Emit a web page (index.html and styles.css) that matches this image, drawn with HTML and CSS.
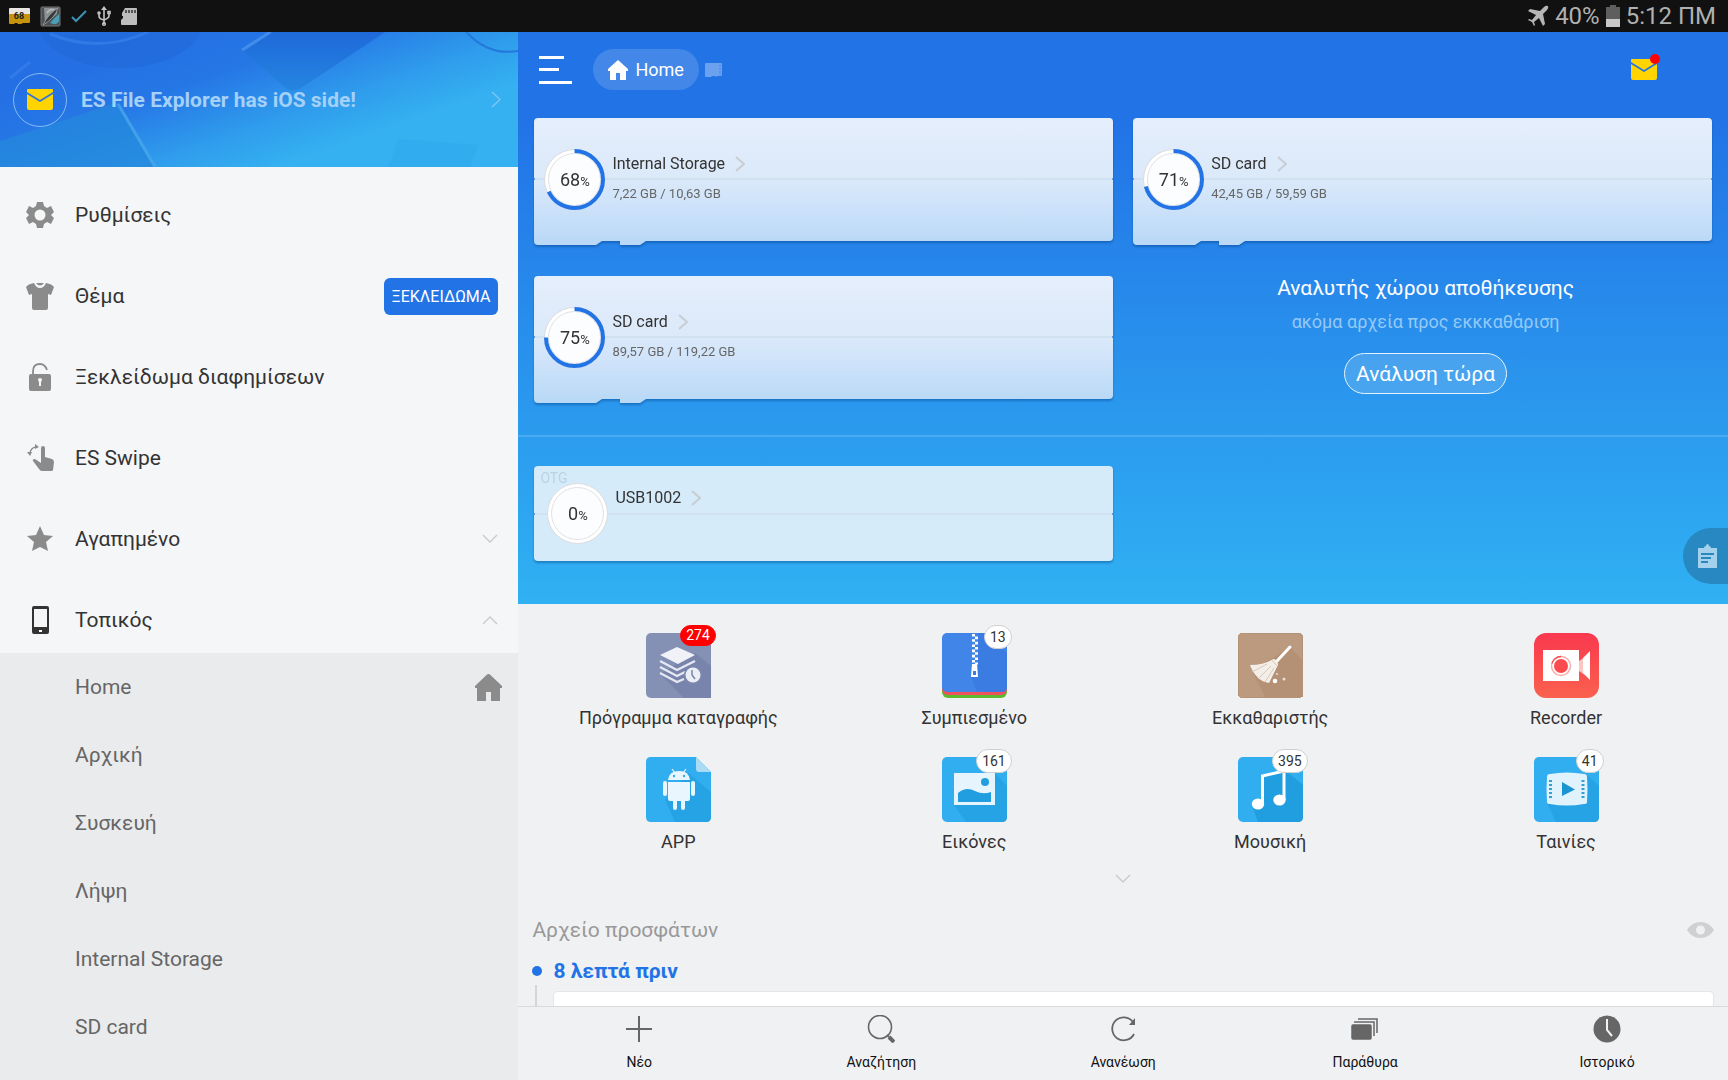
FILE: index.html
```html
<!doctype html>
<html lang="el">
  <head>
    <meta charset="UTF-8" />
    <meta name="viewport" content="width=device-width, initial-scale=1.0" />
    <title>ES File Explorer</title>
    <link rel="stylesheet" href="styles.css">
  </head>
  <body>
    <header class="status-bar">
      <div class="status-icons">
        <svg width="21" height="17" viewBox="0 0 21 17">
          <path d="M1 0h19q1 0 1 1v6H0V1q0-1 1-1z" fill="#e8e6df" />
          <path d="M0 6h21v8q0 1-1 1h-6l-2 1H9l-1-1H6l-1 1H1q-1 0-1-1z" fill="#c6930c" />
          <text x="10" y="11" text-anchor="middle" class="status-count">68</text>
        </svg>
        <svg width="21" height="21" viewBox="0 0 21 21">
          <rect x="1" y="1" width="19" height="19" rx="1" fill="#4c5154" stroke="#777" />
          <path d="M4 2h13v6L5 18z" fill="#8b9092" />
          <path d="M7 7q3-5 7-3" fill="none" stroke="#bbb" stroke-width="1.5" />
          <path d="M10 17q7 3 9-2V8q-5 4-9 9z" fill="#4b9fb8" />
          <path d="M18 2Q8 8 3 19 15 12 18 2z" fill="#34393b" stroke="#aaa" stroke-width=".7" />
        </svg>
        <svg width="16" height="21" viewBox="0 0 16 21">
          <path d="M1 11l4 4L15 5" fill="none" stroke="#3c93b5" stroke-width="2" />
        </svg>
        <svg width="14" height="21" viewBox="0 0 14 21" fill="none" stroke="#c4c4c4" stroke-width="1.6">
          <path d="M7 4v14M2 8v2q0 3 5 4M12 8v2q0 2-5 4" />
          <path d="M7 0l3 4H4z" fill="#c4c4c4" stroke="none" />
          <circle cx="2" cy="7" r="1" /><path d="M11 5.500h2v2h-2z" /><circle cx="7" cy="18" r="1.300" />
        </svg>
        <svg width="16" height="19" viewBox="0 0 16 19">
          <path d="M4 1h11q1 0 1 1v15q0 1-1 1H1q-1 0-1-1v-4l2-2V9H1V6z" fill="#bdbdbd" />
          <path d="M5 3v3M8 3v3M11 3v3M14 3v3" stroke="#333" stroke-width="1.500" />
        </svg>
      </div>
      <div class="status-info">
        <svg width="22" height="22" viewBox="0 0 22 22" fill="#b5b5b5">
          <path d="M21 1q-2-1-4 1l-4 4L3 4 1 6l8 4-4 5-3-1-1 1 4 2 2 4 1-1-1-3 5-4 4 8 2-2-2-10 4-4q2-2 1-4z" />
        </svg>
        <span>40%</span>
        <svg width="14" height="22" viewBox="0 0 14 22">
          <path d="M4 0h6v2h4v12H0V2h4z" fill="#5e5e5e" />
          <path d="M0 14h14v8H0z" fill="#c8c8c8" />
        </svg>
        <time>5:12 ΠΜ</time>
      </div>
    </header>

    <div class="app">
      <aside class="sidebar">
        <a class="promo" href="#ios">
          <svg class="promo-art" viewBox="0 0 518 135" preserveAspectRatio="none">
            <defs>
              <linearGradient id="promoBg" gradientUnits="userSpaceOnUse" x1="200" y1="0" x2="250" y2="145">
                <stop offset="0" stop-color="#2471e4" />
                <stop offset="0.3" stop-color="#2677e6" />
                <stop offset="0.7" stop-color="#2f9cec" />
                <stop offset="1" stop-color="#35b1f1" />
              </linearGradient>
              <linearGradient id="promoDark" x1="0" y1="0" x2="0" y2="1">
                <stop offset="0" stop-color="#1f69da" />
                <stop offset="1" stop-color="#2585e0" />
              </linearGradient>
            </defs>
            <path d="M0 0h518v135H0z" fill="url(#promoBg)" />
            <path d="M0 0h150l-60 40L0 70z" fill="#246fe3" opacity=".7" />
            <ellipse cx="120" cy="-10" rx="82" ry="46" fill="#2068d8" opacity=".5" />
            <path d="M50 2q50 20 98-2M30 30l-20 16" fill="none" stroke="#3b83ec" stroke-width="3" opacity=".6" />
            <path d="M243 19l30-19h112l-84 56q-10 6-18-2z" fill="url(#promoDark)" />
            <path d="M242 18l28-18" stroke="#4e97ee" stroke-width="3" opacity=".7" />
            <path d="M0 109l118-39 38 65H0z" fill="#2488dc" opacity=".75" />
            <path d="M118 72l37 63" stroke="#55b2f2" stroke-width="3" opacity=".6" />
            <path d="M466 0q22 24 52 19" fill="none" stroke="#2378dc" stroke-width="2" />
            <path d="M388 135l10-28 80 6-8 22z" fill="#2ca6ec" opacity=".35" />
          </svg>
          <span class="promo-icon">
            <svg width="26" height="21" viewBox="0 0 26 21" fill="#ffd400">
              <path d="M0 1q0-1 1-1h24q1 0 1 1v2L13 11 0 3z" />
              <path d="M0 5l13 8 13-8v14q0 2-2 2H2q-2 0-2-2z" />
            </svg>
          </span>
          <span class="promo-text">ES File Explorer has iOS side!</span>
          <svg width="10" height="17" viewBox="0 0 10 17" fill="none" stroke="#7cc4f5" stroke-width="1.500"><path d="M1 1l8 7.500L1 16" /></svg>
        </a>

        <ul class="menu">
          <li class="menu-row">
            <a href="#settings">
              <svg width="28" height="28" viewBox="0 0 28 28">
                <path d="M11 1h6l1 4 3 2 4-2 3 6-3 3 3 3-3 6-4-2-3 2-1 4h-6l-1-4-3-2-4 2-3-6 3-3-3-3 3-6 4 2 3-2z" fill="#8b8b8b" />
                <circle cx="14" cy="14" r="5.500" fill="#f5f6f8" />
              </svg>
              Ρυθμίσεις
            </a>
          </li>
          <li class="menu-row">
            <a href="#theme">
              <svg width="28" height="28" viewBox="0 0 28 28" fill="#8b8b8b">
                <path d="M8 1q2 5 6 5t6-5q6 1 8 4l-3 8-3-1v14q0 2-2 2H8q-2 0-2-2V12l-3 1-3-8q2-3 8-4z" />
                <path d="M10 1h8q-4 5-8 0z" />
              </svg>
              Θέμα
            </a>
            <button class="unlock">ΞΕΚΛΕΙΔΩΜΑ</button>
          </li>
          <li class="menu-row">
            <a href="#ads">
              <svg width="28" height="28" viewBox="0 0 28 28">
                <path d="M7 12V8q0-7 7-7 5 0 7 6" fill="none" stroke="#8b8b8b" stroke-width="1.800" />
                <rect x="3" y="11" width="22" height="17" rx="2" fill="#8b8b8b" />
                <circle cx="14" cy="17" r="2" fill="#f5f6f8" /><path d="M13 17h2v6h-2z" fill="#f5f6f8" />
              </svg>
              Ξεκλείδωμα διαφημίσεων
            </a>
          </li>
          <li class="menu-row">
            <a href="#swipe">
              <svg width="28" height="28" viewBox="0 0 28 28">
                <path d="M15 4q0-2 2-2t2 2v9l7 2q2 1 2 3l-1 8q0 1-2 1h-9q-2 0-3-2l-6-8q-1-2 2-2l6 4z" fill="#8b8b8b" />
                <path d="M4 9q1-6 7-6" fill="none" stroke="#8b8b8b" stroke-width="1.300" />
                <path d="M1 8h5l-2 4zM9 0v5l4-2z" fill="#8b8b8b" />
              </svg>
              ES Swipe
            </a>
          </li>
          <li class="menu-row">
            <button class="expander" aria-expanded="false">
              <svg width="28" height="28" viewBox="0 0 28 28"><path d="M14 1l4 9 9 1-7 6 2 9-8-4-8 4 2-9-7-6 9-1z" fill="#8b8b8b" /></svg>
              <span>Αγαπημένο</span>
              <svg width="16" height="10" viewBox="0 0 16 10" fill="none" stroke="#c8c9ca" stroke-width="1.300"><path d="M1 1l7 7 7-7" /></svg>
            </button>
          </li>
          <li class="menu-row">
            <button class="expander" aria-expanded="true">
              <svg width="28" height="28" viewBox="0 0 28 28">
                <rect x="6" y="0" width="17" height="28" rx="2" fill="#333" />
                <path d="M8 3h13v18H8z" fill="#f5f6f8" /><path d="M13 24h3v2h-3z" fill="#fff" />
              </svg>
              <span>Τοπικός</span>
              <svg width="16" height="10" viewBox="0 0 16 10" fill="none" stroke="#c8c9ca" stroke-width="1.300"><path d="M1 9l7-7 7 7" /></svg>
            </button>
          </li>
        </ul>

        <ul class="submenu">
          <li>
            <a href="#home">
              Home
              <svg width="27" height="27" viewBox="0 0 27 27" fill="#8b8b8b"><path d="M13.500 0q1 0 2 1L27 12v2h-2v13h-9v-9h-5v9H2V14H0v-2L11.500 1q1-1 2-1z" /></svg>
            </a>
          </li>
          <li><a href="#root">Αρχική</a></li>
          <li><a href="#device">Συσκευή</a></li>
          <li><a href="#download">Λήψη</a></li>
          <li><a href="#internal">Internal Storage</a></li>
          <li><a href="#sd">SD card</a></li>
        </ul>
      </aside>

      <main class="main">
        <div class="content">
          <section class="hero">
            <div class="toolbar">
              <button class="icon-button" aria-label="Menu">
                <svg width="33" height="28" viewBox="0 0 33 28" fill="#fff"><path d="M0 0h25v3H0zM0 12h20v3H0zM0 25h33v3H0z" /></svg>
              </button>
              <a class="pill" href="#home">
                <svg width="20" height="20" viewBox="0 0 20 20" fill="#fff"><path d="M10 0l10 9v2h-2v9h-6v-7H8v7H2v-9H0V9z" /></svg>
                Home
              </a>
              <svg class="tab-card" width="17" height="14" viewBox="0 0 17 14">
                <path d="M1 0h15q1 0 1 1v11q0 1-1 1h-4l-1 1-1-1H7l-1 1H1q-1 0-1-1V1q0-1 1-1z" fill="#6ba1ee" />
                <path d="M15 2v10" stroke="#4182e6" stroke-dasharray="2 1" />
              </svg>
              <button class="icon-button mail" aria-label="Messages">
                <svg width="26" height="21" viewBox="0 0 26 21" fill="#ffd400">
                  <path d="M0 1q0-1 1-1h24q1 0 1 1v2L13 11 0 3z" />
                  <path d="M0 5l13 8 13-8v14q0 2-2 2H2q-2 0-2-2z" />
                </svg>
                <span class="mail-dot"></span>
              </button>
            </div>

            <div class="storage-grid">
              <a class="storage" href="#internal">
                <div class="storage-body">
                  <div class="ring">
                    <svg viewBox="0 0 61 61">
                      <circle cx="30.500" cy="30.500" r="30" class="ring-base" />
                      <circle cx="30.500" cy="30.500" r="26" class="ring-inner" />
                      <circle cx="30.500" cy="30.500" r="28.500" pathLength="100" stroke-dasharray="68 100" class="ring-value" />
                    </svg>
                    <span>68<small>%</small></span>
                  </div>
                  <div class="storage-info">
                    <div class="storage-name">Internal Storage <svg width="10" height="16" viewBox="0 0 10 16"><path d="M1 1l8 7-8 7" /></svg></div>
                    <div class="storage-size">7,22 GB / 10,63 GB</div>
                  </div>
                </div>
                <svg class="storage-foot" width="112" height="4" viewBox="0 0 112 4"><path d="M0 0h68l-6 4H4Q0 4 0 0zM86 0h26l-6 4H86z" /></svg>
              </a>
              <a class="storage" href="#sd">
                <div class="storage-body">
                  <div class="ring">
                    <svg viewBox="0 0 61 61">
                      <circle cx="30.500" cy="30.500" r="30" class="ring-base" />
                      <circle cx="30.500" cy="30.500" r="26" class="ring-inner" />
                      <circle cx="30.500" cy="30.500" r="28.500" pathLength="100" stroke-dasharray="71 100" class="ring-value" />
                    </svg>
                    <span>71<small>%</small></span>
                  </div>
                  <div class="storage-info">
                    <div class="storage-name">SD card <svg width="10" height="16" viewBox="0 0 10 16"><path d="M1 1l8 7-8 7" /></svg></div>
                    <div class="storage-size">42,45 GB / 59,59 GB</div>
                  </div>
                </div>
                <svg class="storage-foot" width="112" height="4" viewBox="0 0 112 4"><path d="M0 0h68l-6 4H4Q0 4 0 0zM86 0h26l-6 4H86z" /></svg>
              </a>
              <a class="storage" href="#sd2">
                <div class="storage-body">
                  <div class="ring">
                    <svg viewBox="0 0 61 61">
                      <circle cx="30.500" cy="30.500" r="30" class="ring-base" />
                      <circle cx="30.500" cy="30.500" r="26" class="ring-inner" />
                      <circle cx="30.500" cy="30.500" r="28.500" pathLength="100" stroke-dasharray="75 100" class="ring-value" />
                    </svg>
                    <span>75<small>%</small></span>
                  </div>
                  <div class="storage-info">
                    <div class="storage-name">SD card <svg width="10" height="16" viewBox="0 0 10 16"><path d="M1 1l8 7-8 7" /></svg></div>
                    <div class="storage-size">89,57 GB / 119,22 GB</div>
                  </div>
                </div>
                <svg class="storage-foot" width="112" height="4" viewBox="0 0 112 4"><path d="M0 0h68l-6 4H4Q0 4 0 0zM86 0h26l-6 4H86z" /></svg>
              </a>
              <div class="analyser">
                <h2>Αναλυτής χώρου αποθήκευσης</h2>
                <p>ακόμα αρχεία προς εκκκαθάριση</p>
                <button>Ανάλυση τώρα</button>
              </div>
            </div>

            <div class="storage-grid usb">
              <a class="storage" href="#usb">
                <div class="storage-body otg">
                  <span class="otg-label">OTG</span>
                  <div class="ring">
                    <svg viewBox="0 0 61 61">
                      <circle cx="30.500" cy="30.500" r="30" class="ring-base" />
                      <circle cx="30.500" cy="30.500" r="26" class="ring-inner" />
                    </svg>
                    <span>0<small>%</small></span>
                  </div>
                  <div class="storage-info">
                    <div class="storage-name">USB1002 <svg width="10" height="16" viewBox="0 0 10 16"><path d="M1 1l8 7-8 7" /></svg></div>
                  </div>
                </div>
              </a>
            </div>

            <button class="clipboard" aria-label="Clipboard">
              <svg width="19" height="24" viewBox="0 0 19 24">
                <path d="M0 4h6q0-2 2-2 0-2 1.500-2T11 2q2 0 2 2h6v20H0z" fill="#a4d2ec" />
                <path d="M3 10h13M3 14h10M3 18h7" stroke="#2b88bd" stroke-width="2" />
              </svg>
            </button>
          </section>

          <nav class="apps">
            <a class="app-item" href="#logger">
              <span class="app-icon">
                <svg viewBox="0 0 65 65">
                  <rect width="65" height="65" rx="5" fill="#8590b5" />
                  <path d="M14 41l24 24h27V33L49 20z" fill="#7984ac" />
                  <path d="M14 22L31 14l18 8-17 9z" fill="#f0f2f8" />
                  <path d="M14 28l17 9 18-9M14 34l17 9 8-4M14 40l17 9 7-3" fill="none" stroke="#e6e9f3" stroke-width="2.200" />
                  <circle cx="47" cy="42" r="9" fill="#7d88b0" /><circle cx="47" cy="42" r="7.500" fill="#eceef5" />
                  <path d="M46 37v5l3 4" fill="none" stroke="#7984ac" stroke-width="1.500" />
                </svg>
                <span class="badge badge-new">274</span>
              </span>
              Πρόγραμμα καταγραφής
            </a>
            <a class="app-item" href="#compressed">
              <span class="app-icon">
                <svg viewBox="0 0 65 65">
                  <rect y="20" width="65" height="45" rx="6" fill="#5fb92e" />
                  <rect y="17" width="65" height="45" rx="6" fill="#f0525d" />
                  <rect width="65" height="59" rx="5" fill="#4285e8" />
                  <path d="M36 0v43l-7 1 6 15h25q5 0 5-5V20L45 0z" fill="#3a7ce2" />
                  <path d="M31.500 1v31" stroke="#fff" stroke-width="3" stroke-dasharray="2.600 2.600" />
                  <path d="M34.500 3.600v28" stroke="#fff" stroke-width="3" stroke-dasharray="2.600 2.600" />
                  <path d="M30 31h5l1 13h-7z" fill="#fff" /><path d="M31 38h3v4h-3z" fill="#3a7ce2" />
                </svg>
                <span class="badge">13</span>
              </span>
              Συμπιεσμένο
            </a>
            <a class="app-item" href="#cleaner">
              <span class="app-icon">
                <svg viewBox="0 0 65 65">
                  <rect width="65" height="65" rx="5" fill="#bc9a7f" stroke="#ac8a6f" />
                  <path d="M14 38l13 26h38V28L52 14z" fill="#b49075" />
                  <path d="M52 14L39 28" stroke="#fff" stroke-width="3" stroke-linecap="round" />
                  <path d="M35 26q5 0 5 6l-4 8-5 10Q18 48 12 32q14 0 23-6z" fill="#f4eee9" />
                  <path d="M34 27l5 6M33 33l-13 13M29 31l-15 8M36 35l-9 14" stroke="#d8c7b9" stroke-width="1" fill="none" />
                  <circle cx="37" cy="48" r="2.300" fill="#fff" /><circle cx="46" cy="46" r="1.500" fill="#eadfd6" /><circle cx="39" cy="41" r="1" fill="#eadfd6" />
                </svg>
              </span>
              Εκκαθαριστής
            </a>
            <a class="app-item" href="#recorder">
              <span class="app-icon">
                <svg viewBox="0 0 65 65">
                  <defs>
                    <linearGradient id="rec" x1="0" y1="0" x2="0" y2="1"><stop offset="0" stop-color="#fa384f" /><stop offset="1" stop-color="#fa614e" /></linearGradient>
                  </defs>
                  <rect width="65" height="65" rx="12" fill="url(#rec)" />
                  <path d="M9 17h36v31H9z" fill="#fff" /><path d="M45 28l6-4v18l-6-4z" fill="#fdc6c5" /><path d="M49 25l7-7v29l-7-7z" fill="#fff" />
                  <circle cx="27" cy="33" r="7" fill="#fb4b4f" /><circle cx="27" cy="33" r="9.500" fill="none" stroke="#fcaaa9" stroke-width="1.400" />
                  <path d="M27 23.500a9.500 9.500 0 0 0-9 7" fill="none" stroke="#fb4b4f" stroke-width="1.400" />
                </svg>
              </span>
              Recorder
            </a>
            <a class="app-item" href="#app">
              <span class="app-icon">
                <svg viewBox="0 0 65 65">
                  <path d="M5 0h45l15 15v45q0 5-5 5H5q-5 0-5-5V5q0-5 5-5z" fill="#30aeef" />
                  <path d="M19 43l10 22h31q5 0 5-5V35L42 16z" fill="#26a3e5" />
                  <path d="M50 0l15 15H53q-3 0-3-3z" fill="#a9dbf5" />
                  <path d="M22 23q1-9 11-9t11 9zM22 25h22v17q0 2-2 2h-3v7q0 2-2 2t-2-2v-7h-4v7q0 2-2 2t-2-2v-7h-3q-2 0-2-2z" fill="#eaf6fd" />
                  <path d="M26 12l3 4M40 12l-3 4" stroke="#eaf6fd" stroke-width="1.200" />
                  <rect x="17" y="24" width="4" height="15" rx="2" fill="#eaf6fd" /><rect x="45" y="24" width="4" height="15" rx="2" fill="#eaf6fd" />
                  <circle cx="28" cy="19" r="1.200" fill="#30aeef" /><circle cx="38" cy="19" r="1.200" fill="#30aeef" />
                </svg>
              </span>
              APP
            </a>
            <a class="app-item" href="#images">
              <span class="app-icon">
                <svg viewBox="0 0 65 65">
                  <rect width="65" height="65" rx="5" fill="#30aeef" />
                  <path d="M12 48l12 17h36q5 0 5-5V29L53 16z" fill="#26a3e5" />
                  <path d="M12 16h41v32H12z" fill="#e6f5fd" />
                  <path d="M16 36q8-7 17-2 8 4 16 1v10H16z" fill="#219edf" /><circle cx="43" cy="25" r="4" fill="#219edf" />
                </svg>
                <span class="badge">161</span>
              </span>
              Εικόνες
            </a>
            <a class="app-item" href="#music">
              <span class="app-icon">
                <svg viewBox="0 0 65 65">
                  <rect width="65" height="65" rx="5" fill="#30aeef" />
                  <path d="M15 51l5 14h40q5 0 5-5V28L48 14 25 19v30z" fill="#219edf" />
                  <path d="M24.500 47V19L46 14v29" fill="none" stroke="#fff" stroke-width="3" />
                  <ellipse cx="20" cy="47" rx="6.200" ry="5.500" fill="#fff" /><ellipse cx="41.500" cy="43" rx="6.200" ry="5.500" fill="#fff" />
                </svg>
                <span class="badge">395</span>
              </span>
              Μουσική
            </a>
            <a class="app-item" href="#movies">
              <span class="app-icon">
                <svg viewBox="0 0 65 65">
                  <rect width="65" height="65" rx="5" fill="#30aeef" />
                  <path d="M13 46l9 19h38q5 0 5-5V29L52 17z" fill="#26a3e5" />
                  <path d="M16 17q17-3 34 0 3 0 3 3 1 12 0 25 0 2-3 2-17 3-34 0-3 0-3-2-1-13 0-25 0-3 3-3z" fill="#e0f3fc" />
                  <path d="M16.500 23v20M49 23v20" stroke="#30a0d8" stroke-width="3" stroke-dasharray="2 2" />
                  <path d="M28 25l13 7.500L28 39z" fill="#1b94d2" />
                </svg>
                <span class="badge">41</span>
              </span>
              Ταινίες
            </a>
          </nav>
          <button class="more" aria-label="More">
            <svg width="16" height="10" viewBox="0 0 16 10" fill="none" stroke="#c8c9ca" stroke-width="1.300"><path d="M1 1l7 7 7-7" /></svg>
          </button>

          <section class="recent">
            <div class="recent-head">
              <h2>Αρχείο προσφάτων</h2>
              <button class="icon-button" aria-label="Visibility">
                <svg width="27" height="16" viewBox="0 0 27 16"><path d="M0 8q5-8 13.500-8T27 8q-5 8-13.500 8T0 8z" fill="#cfd0d1" /><circle cx="13.500" cy="8" r="4.500" fill="#f0f1f3" /></svg>
              </button>
            </div>
            <h3>8 λεπτά πριν</h3>
            <div class="timeline"><div class="timeline-card"></div></div>
          </section>
        </div>

        <nav class="bottom-nav">
          <button>
            <svg width="28" height="28" viewBox="0 0 28 28"><path d="M14 1v26M1 14h26" stroke="#666" stroke-width="2" /></svg>
            Νέο
          </button>
          <button>
            <svg width="28" height="28" viewBox="0 0 28 28" fill="none" stroke="#666"><circle cx="13" cy="12" r="11.500" stroke-width="1.600" /><path d="M20 20l2 2" stroke-width="2" /><path d="M22 22l5 5" stroke-width="4" /></svg>
            Αναζήτηση
          </button>
          <button>
            <svg width="28" height="28" viewBox="0 0 28 28"><path d="M25 19a11.500 11.500 0 1 1-1-12" fill="none" stroke="#666" stroke-width="1.800" /><path d="M26 3v7h-6z" fill="#666" /></svg>
            Ανανέωση
          </button>
          <button>
            <svg width="28" height="28" viewBox="0 0 28 28" fill="none" stroke="#666" stroke-width="1.500"><rect x="1" y="10" width="19" height="14" rx="1" fill="#666" /><path d="M3 7h20v14M7 4h19v14" /></svg>
            Παράθυρα
          </button>
          <button>
            <svg width="28" height="28" viewBox="0 0 28 28"><circle cx="14" cy="14" r="13.500" fill="#666" /><path d="M14 4v11l5 6" fill="none" stroke="#f0f1f3" stroke-width="2" /></svg>
            Ιστορικό
          </button>
        </nav>
      </main>
    </div>
  </body>
</html>
```
FILE: styles.css
```css
* {
  box-sizing: border-box;
}
body {
  margin: 0;
  height: 100vh;
  display: flex;
  flex-direction: column;
  overflow: hidden;
  font-family: Roboto, "Noto Sans", sans-serif;
  color: #333;
  background-color: #f0f1f3;
}
ul,
h2,
h3,
p {
  margin: 0;
  padding: 0;
  list-style: none;
  font-weight: normal;
}
a {
  color: inherit;
  text-decoration: none;
}
button {
  margin: 0;
  padding: 0;
  border: none;
  background: none;
  color: inherit;
  font-family: inherit;
  cursor: pointer;
}
svg {
  display: block;
  flex-shrink: 0;
}

/* status bar */
.status-bar {
  flex-shrink: 0;
  height: 32px;
  padding: 0 12px 0 9px;
  display: flex;
  align-items: center;
  justify-content: space-between;
  background-color: #111;
  color: #b0b0b0;
  font-size: 24px;
  line-height: 34px;
}
.status-icons {
  display: flex;
  align-items: center;
  gap: 10px;
}
.status-count {
  font-size: 9px;
  font-weight: bold;
  fill: #222;
}
.status-info {
  display: flex;
  align-items: center;
  gap: 6px;
}

.app {
  flex: 1;
  min-height: 0;
  display: flex;
}

/* sidebar */
.sidebar {
  width: 30%;
  flex-shrink: 0;
  display: flex;
  flex-direction: column;
  overflow: hidden;
  background-color: #f5f6f8;
  font-size: 21px;
}
.promo {
  position: relative;
  flex-shrink: 0;
  height: 135px;
  padding: 0 17px 0 13px;
  display: flex;
  align-items: center;
  gap: 14px;
  color: #a5d0f8;
  font-weight: bold;
}
.promo > * {
  position: relative;
}
.promo .promo-art {
  position: absolute;
  inset: 0;
  width: 100%;
  height: 100%;
}
.promo-icon {
  width: 54px;
  height: 54px;
  display: grid;
  place-items: center;
  border: 1px solid #86baf5;
  border-radius: 50%;
}
.promo-text {
  flex: 1;
}
.menu-row {
  height: 81px;
  padding: 15px 20px 0 26px;
  display: flex;
  align-items: center;
}
.menu-row a,
.expander {
  flex: 1;
  display: flex;
  align-items: center;
  gap: 21px;
  font-size: 21px;
  text-align: left;
}
.expander span {
  flex: 1;
}
.unlock {
  height: 37px;
  padding: 0 8px;
  border-radius: 6px;
  background-color: #2273e6;
  color: #fff;
  font-size: 16px;
}
.submenu {
  flex: 1;
  background-color: #eaebed;
  color: #666;
}
.submenu a {
  height: 68px;
  padding: 0 16px 0 75px;
  display: flex;
  align-items: center;
  justify-content: space-between;
}

/* main column */
.main {
  flex: 1;
  min-width: 0;
  display: flex;
  flex-direction: column;
}
.content {
  flex: 1;
  min-height: 0;
  overflow: hidden;
}
.hero {
  position: relative;
  background: linear-gradient(#2273e6 15%, #30b1f3);
}
.toolbar {
  height: 86px;
  padding: 0 71px 11px 21px;
  display: flex;
  align-items: center;
}
.icon-button {
  display: block;
}
.pill {
  height: 41px;
  margin: 0 6px 0 21px;
  padding: 0 15px;
  display: flex;
  align-items: center;
  gap: 7px;
  border-radius: 21px;
  background-color: #4388e9;
  color: #fff;
  font-size: 18px;
}
.mail {
  position: relative;
  margin-left: auto;
}
.mail-dot {
  position: absolute;
  top: -5px;
  right: -3px;
  width: 10px;
  height: 10px;
  border-radius: 50%;
  background-color: #f00;
}
.storage-grid {
  padding: 0 16px 32px;
  display: grid;
  grid-template-columns: 1fr 1fr;
  gap: 31px 20px;
}
.storage-grid.usb {
  padding: 29px 16px 43px;
  border-top: 2px solid rgba(255, 255, 255, 0.15);
}
.storage {
  filter: drop-shadow(0 2px 1px rgba(0, 60, 130, 0.4));
}
.storage-body {
  position: relative;
  height: 123px;
  padding-left: 10px;
  display: flex;
  align-items: center;
  gap: 7px;
  border-radius: 4px 4px 4px 0;
  background: linear-gradient(#e5eefc, #dbe9f9 50%, #cde2fa 72%, #bad9f6);
}
.storage-body::before {
  content: "";
  position: absolute;
  top: 49%;
  left: 0;
  right: 0;
  height: 2px;
  border: solid #5c9fe4;
  border-width: 0 1px;
  background-color: #d2e1f0;
}
.storage-foot {
  fill: #bad9f6;
}
.storage-body.otg {
  height: 95px;
  padding-left: 13px;
  border-radius: 4px;
  background: #d5ebfa;
}
.otg-label {
  position: absolute;
  top: 4px;
  left: 6px;
  color: #b9d3e4;
  font-size: 14px;
}
.ring {
  position: relative;
  width: 61px;
  height: 61px;
  display: grid;
  place-items: center;
  font-size: 18px;
}
.ring > * {
  grid-area: 1 / 1;
}
.ring svg {
  width: 61px;
  height: 61px;
  transform: rotate(-90deg);
}
.ring span {
  position: relative;
}
.ring small {
  font-size: 13px;
}
.ring-base {
  fill: #fff;
  stroke: #d9dbde;
}
.ring-inner {
  fill: #fcfdff;
  stroke: #dfe1e4;
}
.ring-value {
  fill: none;
  stroke: #2273e6;
  stroke-width: 4;
}
.storage-info {
  height: 62px;
  line-height: 30px;
}
.storage-name {
  display: flex;
  align-items: center;
  gap: 10px;
  font-size: 16px;
}
.storage-name svg {
  fill: none;
  stroke: #c9cdd2;
  stroke-width: 2;
}
.storage-size {
  color: #666;
  font-size: 13px;
}
.analyser {
  display: flex;
  flex-direction: column;
  align-items: center;
  padding-left: 6px;
  color: #fff;
}
.analyser h2 {
  font-size: 21px;
  line-height: 24px;
}
.analyser p {
  margin: 10px 0 19px;
  color: #94c9f6;
  font-size: 18px;
  line-height: 24px;
}
.analyser button {
  height: 41px;
  padding: 0 11px;
  border: 1px solid #e6f3fd;
  border-radius: 21px;
  background-color: rgba(255, 255, 255, 0.15);
  font-size: 21px;
}
.clipboard {
  position: absolute;
  right: 0;
  bottom: 20px;
  width: 45px;
  height: 56px;
  padding-left: 15px;
  border-radius: 28px 0 0 28px;
  background-color: #2788c2;
}

/* shortcuts */
.apps {
  padding: 29px 14px 0 12px;
  display: grid;
  grid-template-columns: repeat(4, 1fr);
  row-gap: 27px;
}
.app-item {
  display: flex;
  flex-direction: column;
  align-items: center;
  gap: 8px;
  font-size: 18px;
  line-height: 24px;
}
.app-icon {
  position: relative;
  width: 65px;
  height: 65px;
}
.badge {
  position: absolute;
  top: -8px;
  right: -5px;
  padding: 0 5px;
  border: 1px solid #d0d0d0;
  border-radius: 12px;
  background-color: #fff;
  font-size: 14px;
  line-height: 22px;
}
.badge-new {
  border-color: #f00;
  background-color: #f00;
  color: #fff;
  line-height: 19px;
}
.more {
  display: block;
  margin: 20px auto 0;
}

/* recent files */
.recent {
  padding: 32px 14px 0;
}
.recent-head {
  display: flex;
  align-items: center;
  justify-content: space-between;
}
.recent h2 {
  color: #999;
  font-size: 21px;
  line-height: 28px;
}
.recent h3 {
  margin-top: 13px;
  display: flex;
  align-items: center;
  gap: 11px;
  color: #2273e6;
  font-size: 21px;
  font-weight: bold;
  line-height: 28px;
}
.recent h3::before {
  content: "";
  width: 10px;
  height: 10px;
  border-radius: 50%;
  background-color: #2273e6;
}
.timeline {
  margin-left: 3px;
  padding: 6px 0 0 16px;
  border-left: 2px solid #d3d5d7;
}
.timeline-card {
  height: 100px;
  border: 1px solid #e3e5e6;
  border-radius: 4px;
  background-color: #fff;
}

.bottom-nav {
  flex-shrink: 0;
  display: grid;
  grid-template-columns: repeat(5, 1fr);
  border-top: 1px solid #d9dadb;
  background-color: #f0f1f3;
  color: #111;
}
.bottom-nav button {
  padding: 8px 0 9px;
  display: flex;
  flex-direction: column;
  align-items: center;
  gap: 10px;
  font-size: 14px;
  line-height: 18px;
}
```
